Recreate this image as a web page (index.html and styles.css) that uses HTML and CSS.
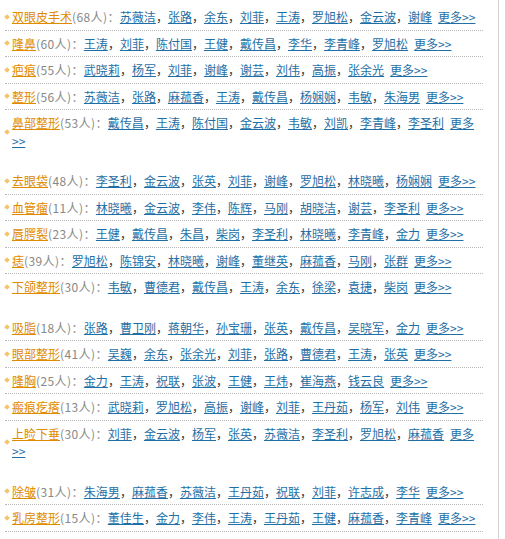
FILE: index.html
```html
<!DOCTYPE html>
<html lang="zh-CN">
<head>
<meta charset="utf-8">
<title>专家</title>
<link rel="stylesheet" href="styles.css">
</head>
<body>
<div class="wrap">
  <ul class="group">
    <li class="row"><a class="cat" href="#">双眼皮手术</a><span class="num">(68人)：</span><a href="#">苏薇洁</a>，<a href="#">张路</a>，<a href="#">余东</a>，<a href="#">刘菲</a>，<a href="#">王涛</a>，<a href="#">罗旭松</a>，<a href="#">金云波</a>，<a href="#">谢峰</a><a class="more" href="#"><span>更多</span><span>&gt;&gt;</span></a></li>
    <li class="row"><a class="cat" href="#">隆鼻</a><span class="num">(60人)：</span><a href="#">王涛</a>，<a href="#">刘菲</a>，<a href="#">陈付国</a>，<a href="#">王健</a>，<a href="#">戴传昌</a>，<a href="#">李华</a>，<a href="#">李青峰</a>，<a href="#">罗旭松</a><a class="more" href="#"><span>更多</span><span>&gt;&gt;</span></a></li>
    <li class="row"><a class="cat" href="#">疤痕</a><span class="num">(55人)：</span><a href="#">武晓莉</a>，<a href="#">杨军</a>，<a href="#">刘菲</a>，<a href="#">谢峰</a>，<a href="#">谢芸</a>，<a href="#">刘伟</a>，<a href="#">高振</a>，<a href="#">张余光</a><a class="more" href="#"><span>更多</span><span>&gt;&gt;</span></a></li>
    <li class="row"><a class="cat" href="#">整形</a><span class="num">(56人)：</span><a href="#">苏薇洁</a>，<a href="#">张路</a>，<a href="#">麻菰香</a>，<a href="#">王涛</a>，<a href="#">戴传昌</a>，<a href="#">杨娴娴</a>，<a href="#">韦敏</a>，<a href="#">朱海男</a><a class="more" href="#"><span>更多</span><span>&gt;&gt;</span></a></li>
    <li class="row last"><a class="cat" href="#">鼻部整形</a><span class="num">(53人)：</span><a href="#">戴传昌</a>，<a href="#">王涛</a>，<a href="#">陈付国</a>，<a href="#">金云波</a>，<a href="#">韦敏</a>，<a href="#">刘凯</a>，<a href="#">李青峰</a>，<a href="#">李圣利</a><a class="more" href="#"><span>更多</span><span>&gt;&gt;</span></a></li>
  </ul>
  <ul class="group">
    <li class="row"><a class="cat" href="#">去眼袋</a><span class="num">(48人)：</span><a href="#">李圣利</a>，<a href="#">金云波</a>，<a href="#">张英</a>，<a href="#">刘菲</a>，<a href="#">谢峰</a>，<a href="#">罗旭松</a>，<a href="#">林晓曦</a>，<a href="#">杨娴娴</a><a class="more" href="#"><span>更多</span><span>&gt;&gt;</span></a></li>
    <li class="row"><a class="cat" href="#">血管瘤</a><span class="num">(11人)：</span><a href="#">林晓曦</a>，<a href="#">金云波</a>，<a href="#">李伟</a>，<a href="#">陈辉</a>，<a href="#">马刚</a>，<a href="#">胡晓洁</a>，<a href="#">谢芸</a>，<a href="#">李圣利</a><a class="more" href="#"><span>更多</span><span>&gt;&gt;</span></a></li>
    <li class="row"><a class="cat" href="#">唇腭裂</a><span class="num">(23人)：</span><a href="#">王健</a>，<a href="#">戴传昌</a>，<a href="#">朱昌</a>，<a href="#">柴岗</a>，<a href="#">李圣利</a>，<a href="#">林晓曦</a>，<a href="#">李青峰</a>，<a href="#">金力</a><a class="more" href="#"><span>更多</span><span>&gt;&gt;</span></a></li>
    <li class="row"><a class="cat" href="#">痣</a><span class="num">(39人)：</span><a href="#">罗旭松</a>，<a href="#">陈锦安</a>，<a href="#">林晓曦</a>，<a href="#">谢峰</a>，<a href="#">董继英</a>，<a href="#">麻菰香</a>，<a href="#">马刚</a>，<a href="#">张群</a><a class="more" href="#"><span>更多</span><span>&gt;&gt;</span></a></li>
    <li class="row last"><a class="cat" href="#">下颌整形</a><span class="num">(30人)：</span><a href="#">韦敏</a>，<a href="#">曹德君</a>，<a href="#">戴传昌</a>，<a href="#">王涛</a>，<a href="#">余东</a>，<a href="#">徐梁</a>，<a href="#">袁捷</a>，<a href="#">柴岗</a><a class="more" href="#"><span>更多</span><span>&gt;&gt;</span></a></li>
  </ul>
  <ul class="group">
    <li class="row"><a class="cat" href="#">吸脂</a><span class="num">(18人)：</span><a href="#">张路</a>，<a href="#">曹卫刚</a>，<a href="#">蒋朝华</a>，<a href="#">孙宝珊</a>，<a href="#">张英</a>，<a href="#">戴传昌</a>，<a href="#">吴晓军</a>，<a href="#">金力</a><a class="more" href="#"><span>更多</span><span>&gt;&gt;</span></a></li>
    <li class="row"><a class="cat" href="#">眼部整形</a><span class="num">(41人)：</span><a href="#">吴巍</a>，<a href="#">余东</a>，<a href="#">张余光</a>，<a href="#">刘菲</a>，<a href="#">张路</a>，<a href="#">曹德君</a>，<a href="#">王涛</a>，<a href="#">张英</a><a class="more" href="#"><span>更多</span><span>&gt;&gt;</span></a></li>
    <li class="row"><a class="cat" href="#">隆胸</a><span class="num">(25人)：</span><a href="#">金力</a>，<a href="#">王涛</a>，<a href="#">祝联</a>，<a href="#">张波</a>，<a href="#">王健</a>，<a href="#">王炜</a>，<a href="#">崔海燕</a>，<a href="#">钱云良</a><a class="more" href="#"><span>更多</span><span>&gt;&gt;</span></a></li>
    <li class="row"><a class="cat" href="#">瘢痕疙瘩</a><span class="num">(13人)：</span><a href="#">武晓莉</a>，<a href="#">罗旭松</a>，<a href="#">高振</a>，<a href="#">谢峰</a>，<a href="#">刘菲</a>，<a href="#">王丹茹</a>，<a href="#">杨军</a>，<a href="#">刘伟</a><a class="more" href="#"><span>更多</span><span>&gt;&gt;</span></a></li>
    <li class="row last"><a class="cat" href="#">上睑下垂</a><span class="num">(30人)：</span><a href="#">刘菲</a>，<a href="#">金云波</a>，<a href="#">杨军</a>，<a href="#">张英</a>，<a href="#">苏薇洁</a>，<a href="#">李圣利</a>，<a href="#">罗旭松</a>，<a href="#">麻菰香</a><a class="more" href="#"><span>更多</span><span>&gt;&gt;</span></a></li>
  </ul>
  <ul class="group">
    <li class="row"><a class="cat" href="#">除皱</a><span class="num">(31人)：</span><a href="#">朱海男</a>，<a href="#">麻菰香</a>，<a href="#">苏薇洁</a>，<a href="#">王丹茹</a>，<a href="#">祝联</a>，<a href="#">刘菲</a>，<a href="#">许志成</a>，<a href="#">李华</a><a class="more" href="#"><span>更多</span><span>&gt;&gt;</span></a></li>
    <li class="row"><a class="cat" href="#">乳房整形</a><span class="num">(15人)：</span><a href="#">董佳生</a>，<a href="#">金力</a>，<a href="#">李伟</a>，<a href="#">王涛</a>，<a href="#">王丹茹</a>，<a href="#">王健</a>，<a href="#">麻菰香</a>，<a href="#">李青峰</a><a class="more" href="#"><span>更多</span><span>&gt;&gt;</span></a></li>
  </ul>
</div>
</body>
</html>
```
FILE: styles.css
```css
html, body {
  margin: 0;
  padding: 0;
  background: #fff;
}
body {
  font-family: "Noto Sans CJK SC", "Noto Sans", sans-serif;
  font-size: 12px;
  color: #333;
}
.wrap {
  width: 499px;
  min-height: 539px;
  border-right: 1px solid #d4d4d4;
  padding-top: 4px;
  box-sizing: border-box;
}
.group {
  list-style: none;
  margin: 0 0 15px 5px;
  padding: 0;
  width: 478px;
}
.row {
  position: relative;
  padding: 4px 0 4px 7px;
  line-height: 17.5px;
  border-bottom: 1px dotted #b8b8b8;
}
.row.last {
  border-bottom: none;
}
.row::before {
  content: "";
  position: absolute;
  left: 0;
  top: 50%;
  width: 4px;
  height: 4px;
  margin-top: -2px;
  background: #f2c46e;
  transform: rotate(45deg);
}
.row a {
  color: #1f6fa6;
  text-decoration: underline;
}
.row a.cat {
  color: #e08a00;
}
.num {
  color: #888;
  letter-spacing: 0.4px;
}
.row a.more {
  margin-left: 6px;
}
```
